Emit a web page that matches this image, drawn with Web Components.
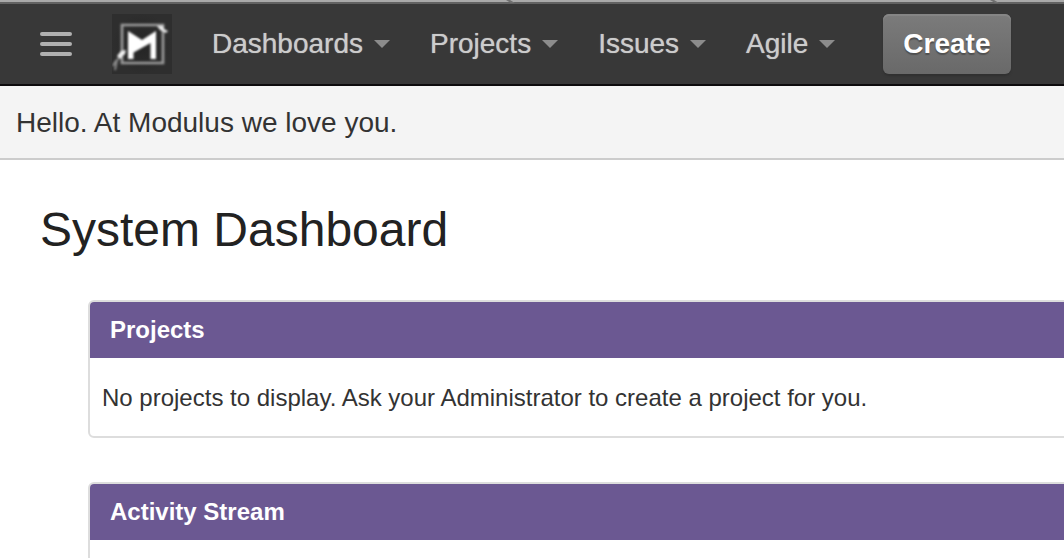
<!DOCTYPE html>
<html lang="en">
<head>
<meta charset="utf-8">
<meta name="viewport" content="width=device-width, initial-scale=1">
<title>System Dashboard</title>
<style>
body { margin: 0; background: #fff; color: #333; font-family: "Liberation Sans", Arial, sans-serif; font-size: 24px; line-height: 32px; }
</style>
</head>
<body>
<app-page>
  <window-edge></window-edge>
  <app-header>
    <menu-button></menu-button>
    <app-logo></app-logo>
    <app-nav>
      <nav-item>Dashboards</nav-item>
      <nav-item>Projects</nav-item>
      <nav-item>Issues</nav-item>
      <nav-item>Agile</nav-item>
    </app-nav>
    <create-button>Create</create-button>
  </app-header>
  <announcement-banner>Hello. At Modulus we love you.</announcement-banner>
  <dash-board>
    <span slot="title">System Dashboard</span>
    <dash-gadget><span slot="title">Projects</span>No projects to display. Ask your Administrator to create a project for you.</dash-gadget>
    <dash-gadget><span slot="title">Activity Stream</span></dash-gadget>
  </dash-board>
</app-page>
<script>
const define = (name, markup) => {
  const template = document.createElement('template');
  template.innerHTML = markup;
  customElements.define(name, class extends HTMLElement {
    constructor() {
      super();
      this.attachShadow({ mode: 'open' }).append(template.content.cloneNode(true));
    }
  });
};

define('app-page', `
<style>:host { display: flex; flex-direction: column; height: 100vh; overflow: hidden; }</style>
<slot></slot>`);

define('window-edge', `
<style>
:host { display: flex; flex: none; height: 2px; background: #a9a9a9; border-bottom: 2px solid #626262; }
svg { display: block; width: 100%; height: 3px; }
</style>
<svg viewBox="0 0 1064 3" preserveAspectRatio="none" aria-hidden="true">
  <path d="M506 0h4l5 3h-4zM990 0h4l5 3h-4z" fill="#707070"/>
</svg>`);

define('app-header', `
<style>
:host { display: block; flex: none; background: #383838; border-bottom: 2px solid #0d0b0d; }
header { display: flex; align-items: center; height: 80px; padding: 0 40px; }
</style>
<header><slot></slot></header>`);

define('menu-button', `
<style>
:host { display: block; margin-right: 40px; }
button { display: flex; flex-direction: column; gap: 6px; width: 32px; padding: 0; border: 0; background: none; }
i { height: 4px; border-radius: 2px; background: #b0b0b0; }
</style>
<button type="button" aria-label="Menu"><i></i><i></i><i></i></button>`);

define('app-logo', `
<style>
:host { display: block; margin-right: 40px; }
a, svg { display: block; }
</style>
<a href="#" aria-label="Home">
<svg width="60" height="60" viewBox="0 0 60 60">
  <defs>
    <filter id="soft" filterUnits="userSpaceOnUse" x="0" y="0" width="60" height="60"><feGaussianBlur stdDeviation="0.8"/></filter>
    <radialGradient id="back"><stop offset="0" stop-color="#242424"/><stop offset="1" stop-color="#2e2e2e"/></radialGradient>
  </defs>
  <rect width="60" height="60" fill="url(#back)"/>
  <g filter="url(#soft)">
    <path d="M10 38V11H51V49H10V43" fill="none" stroke="#9c9c9c" stroke-width="2.6"/>
    <path d="M16 17L30 26L44 17V45H38.500V29L21.500 38.500V45H16Z" fill="#fff"/>
    <path d="M45 12L51 12L52 15L56 17L54 19L48 16Z" fill="#e8e8e8"/>
    <path d="M5 42L9 37L14 36L13 40L8 45Z" fill="#f0f0f0"/>
    <path d="M7 44L3 48L1 52M5 46L3 56" fill="none" stroke="#888" stroke-width="2"/>
  </g>
</svg>
</a>`);

define('app-nav', `
<style>nav { display: flex; gap: 40px; }</style>
<nav aria-label="Main"><slot></slot></nav>`);

define('nav-item', `
<style>
:host { display: block; }
a { display: flex; align-items: center; gap: 11px; color: #ccc; font-size: 28px; line-height: 40px; text-decoration: none; text-shadow: 0 0 1px #aaa; }
svg { display: block; }
</style>
<a href="#"><slot></slot><svg width="16" height="8" viewBox="0 0 16 8" aria-hidden="true"><path d="M0 0H16L8 8Z" fill="#8c8c8c"/></svg></a>`);

define('create-button', `
<style>
:host { display: block; margin-left: 48px; }
button { display: block; height: 60px; padding: 0 20px; border: 0; border-radius: 6px; color: #fff;
  background: linear-gradient(#7b7b7b, #696969); box-shadow: inset 0 2px #858585, 0 2px 2px #303030;
  font: bold 28px/40px "Liberation Sans", Arial, sans-serif; text-shadow: 0 2px 1px #505050; }
</style>
<button type="button"><slot></slot></button>`);

define('announcement-banner', `
<style>
:host { display: block; flex: none; padding: 16px 16px 14px; background: #f4f4f4; border-bottom: 2px solid #ccc; font-size: 28px; line-height: 42px; }
</style>
<slot></slot>`);

define('dash-board', `
<style>
:host { display: flex; flex: 1; flex-direction: column; min-height: 0; overflow: hidden; }
main { padding: 42px 0 0 40px; }
h1 { margin: 0 0 42px; color: #222; font-size: 48px; font-weight: 400; line-height: 56px; }
.gadgets { display: flex; flex-direction: column; gap: 44px; margin: 0 -16px 0 48px; }
</style>
<main>
  <h1><slot name="title"></slot></h1>
  <div class="gadgets"><slot></slot></div>
</main>`);

define('dash-gadget', `
<style>
:host { display: block; }
section { overflow: hidden; border: 2px solid #ddd; border-radius: 6px; background: #fff; }
h2 { margin: 0; padding: 12px 20px; background: #6b5892; color: #fff; font-size: 24px; font-weight: 700; line-height: 32px; }
.body { min-height: 32px; padding: 24px 12px 22px; }
</style>
<section>
  <h2><slot name="title"></slot></h2>
  <div class="body"><slot></slot></div>
</section>`);
</script>
</body>
</html>
